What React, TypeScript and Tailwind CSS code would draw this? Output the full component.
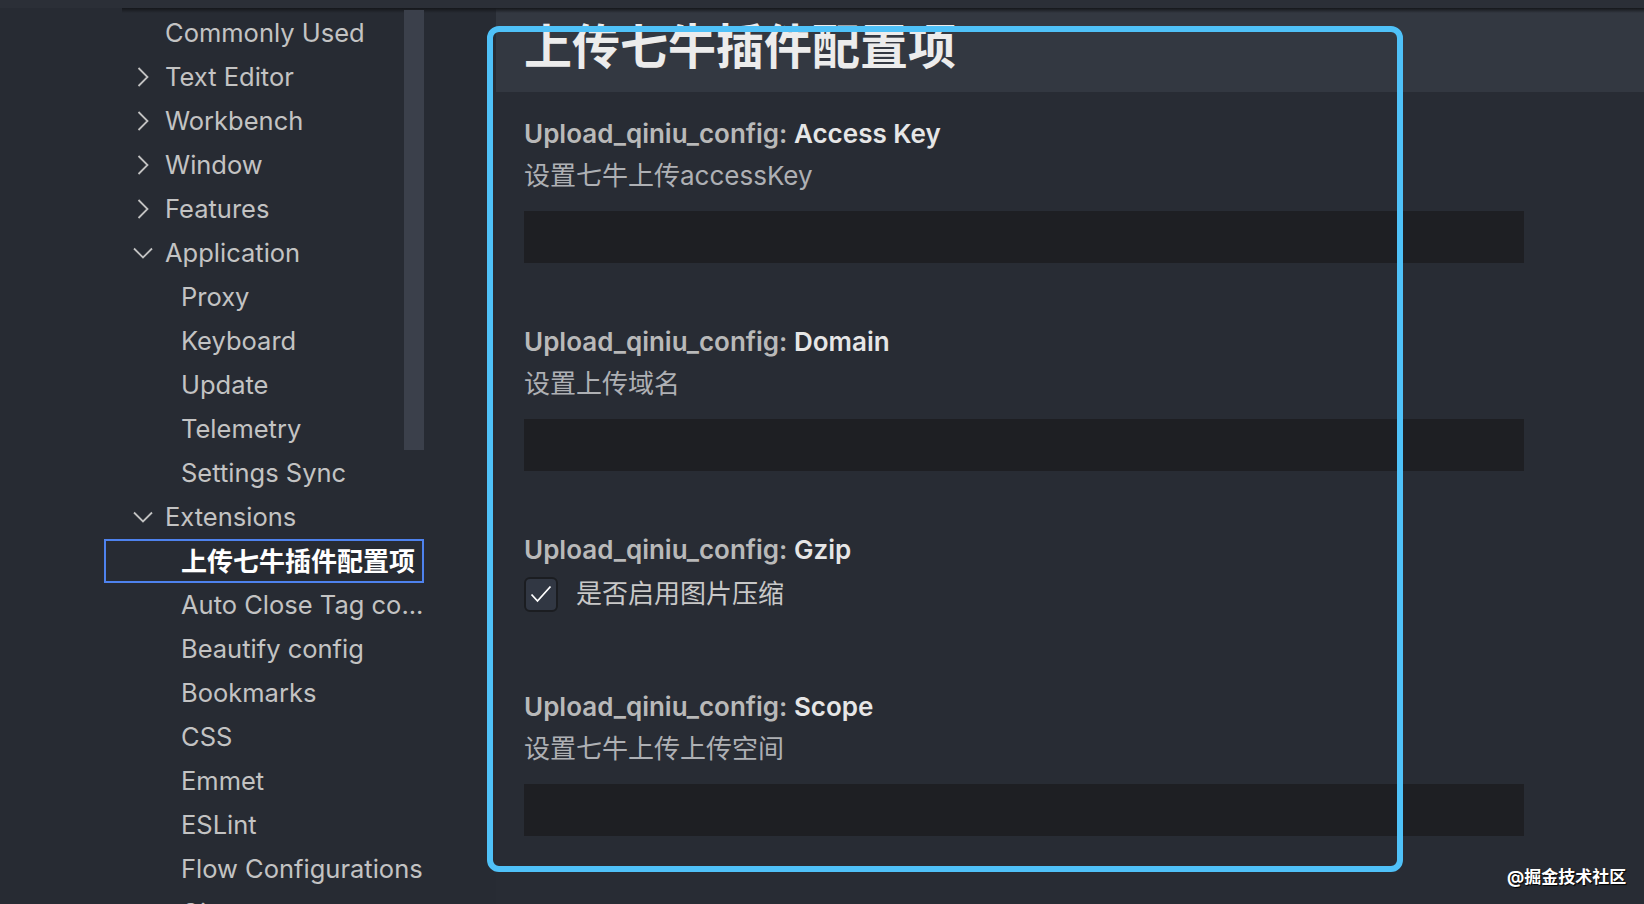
import React from 'react';

type TocItem = {
  label: string;
  level: 1 | 2;
  chevron?: 'right' | 'down';
  selected?: boolean;
};

const toc: TocItem[] = [
  { label: 'Commonly Used', level: 1 },
  { label: 'Text Editor', level: 1, chevron: 'right' },
  { label: 'Workbench', level: 1, chevron: 'right' },
  { label: 'Window', level: 1, chevron: 'right' },
  { label: 'Features', level: 1, chevron: 'right' },
  { label: 'Application', level: 1, chevron: 'down' },
  { label: 'Proxy', level: 2 },
  { label: 'Keyboard', level: 2 },
  { label: 'Update', level: 2 },
  { label: 'Telemetry', level: 2 },
  { label: 'Settings Sync', level: 2 },
  { label: 'Extensions', level: 1, chevron: 'down' },
  { label: '上传七牛插件配置项', level: 2, selected: true },
  { label: 'Auto Close Tag co...', level: 2 },
  { label: 'Beautify config', level: 2 },
  { label: 'Bookmarks', level: 2 },
  { label: 'CSS', level: 2 },
  { label: 'Emmet', level: 2 },
  { label: 'ESLint', level: 2 },
  { label: 'Flow Configurations', level: 2 },
  { label: 'Git', level: 2 },
];

function Chevron({ dir }: { dir: 'right' | 'down' }) {
  if (dir === 'right') {
    return (
      <svg width="12" height="20" viewBox="0 0 12 20" className="ml-[4px]">
        <path d="M1.5 1 L10.5 10 L1.5 19" fill="none" stroke="#c2c2c2" strokeWidth="1.8" />
      </svg>
    );
  }
  return (
    <svg width="20" height="12" viewBox="0 0 20 12">
      <path d="M1 1.5 L10 10.5 L19 1.5" fill="none" stroke="#c2c2c2" strokeWidth="1.8" />
    </svg>
  );
}

function TocRow({ item }: { item: TocItem }) {
  if (item.selected) {
    return (
      <div className="ml-[104px] flex h-[44px] w-[320px] items-center border-2 border-[#4e82ee] pl-[75px] text-[26px] font-bold text-white">
        {item.label}
      </div>
    );
  }
  if (item.level === 2) {
    return (
      <div className="flex h-[44px] items-center pl-[181px] text-[25.5px] text-[#c3c3c3] whitespace-nowrap">
        {item.label}
      </div>
    );
  }
  return (
    <div className="flex h-[44px] items-center pl-[133px] text-[25.5px] text-[#c3c3c3] whitespace-nowrap">
      <div className="flex w-[32px] items-center">{item.chevron && <Chevron dir={item.chevron} />}</div>
      {item.label}
    </div>
  );
}

function SettingLabel({ name }: { name: string }) {
  return (
    <div className="text-[26px] leading-[36px] font-semibold">
      <span className="text-[#b9b9b9]">Upload_qiniu_config: </span>
      <span className="text-[#e6e6e6]">{name}</span>
    </div>
  );
}

function TextSetting({ name, desc, className }: { name: string; desc: string; className: string }) {
  return (
    <div className={className}>
      <SettingLabel name={name} />
      <div className="mt-[6px] text-[26px] leading-[36px] text-[#aeb0b4]">{desc}</div>
      <div className="mt-[17px] h-[52px] w-[1000px] bg-[#1e1f23]" />
    </div>
  );
}

export default function App() {
  return (
    <div className="relative h-[904px] w-[1644px] overflow-hidden bg-[#282c34] font-['Inter','Noto_Sans_CJK_SC',sans-serif]">
      <div className="h-[8px] bg-[#2b2f37]" />
      <div className="flex">
        {/* table of contents */}
        <div className="w-[424px] shrink-0 bg-[#272b33] pt-[3px]">
          {toc.map((item) => (
            <TocRow key={item.label} item={item} />
          ))}
        </div>
        <div className="w-[72px] shrink-0 bg-[#272b33]" />

        {/* settings list */}
        <div className="flex-1">
          <div className="h-[84px] bg-[#333841] pl-[28px] pt-[11px]">
            <div className="text-[48px] leading-[56px] font-bold text-[#ececec]">上传七牛插件配置项</div>
          </div>
          <div className="pl-[28px] pt-[24px]">
            <TextSetting name="Access Key" desc="设置七牛上传accessKey" className="" />
            <TextSetting name="Domain" desc="设置上传域名" className="mt-[61px]" />
            <div className="mt-[61px]">
              <SettingLabel name="Gzip" />
              <div className="mt-[8px] flex items-center">
                <div className="flex h-[35px] w-[34px] items-center justify-center rounded-[6px] border-2 border-[#1b1d21] bg-[#313743]">
                  <svg width="22" height="18" viewBox="0 0 22 18">
                    <path d="M1.5 9.5 L7.5 16 L20.5 1.5" fill="none" stroke="#ffffff" strokeWidth="1.8" />
                  </svg>
                </div>
                <span className="ml-[18px] text-[26px] leading-[36px] text-[#c8c8c8]">是否启用图片压缩</span>
              </div>
            </div>
            <TextSetting name="Scope" desc="设置七牛上传上传空间" className="mt-[77px]" />
          </div>
        </div>
      </div>

      {/* header shadow */}
      <div className="absolute left-[122px] right-0 top-[8px] h-[5px] bg-gradient-to-b from-[#15171b] to-transparent" />
      {/* toc scrollbar slider */}
      <div className="absolute left-[404px] top-[10px] h-[440px] w-[20px] bg-[#3b404b]" />
      {/* highlight frame */}
      <div className="absolute left-[487px] top-[26px] h-[846px] w-[916px] rounded-[12px] border-[6px] border-[#4fc1f8]" />
      {/* watermark */}
      <div className="absolute left-[1507px] top-[867px] text-[17px] leading-[20px] font-bold text-white [text-shadow:1px_1px_1px_#000]">
        @掘金技术社区
      </div>
    </div>
  );
}
